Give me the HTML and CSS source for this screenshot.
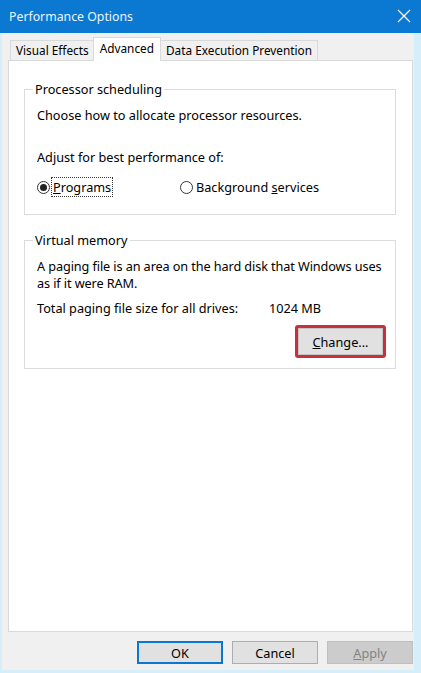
FILE: index.html
```html
<!DOCTYPE html>
<html lang="en">
<head>
    <meta charset="UTF-8">
    <meta name="viewport" content="width=device-width, initial-scale=1.0">
    <title>Performance Options</title>
    <link rel="stylesheet" href="styles.css">
</head>
<body>
    <div class="window">
        <div class="titlebar">
            <span class="title">Performance Options</span>
            <span class="close">
                <svg width="14" height="14" viewBox="0 0 14 14" fill="none" xmlns="http://www.w3.org/2000/svg">
                    <path d="M1 1 L13 13 M13 1 L1 13" stroke="#fff" stroke-width="1.2"/>
                </svg>
            </span>
        </div>

        <div class="client">
            <div class="tabs">
                <div class="tab">Visual Effects</div>
                <div class="tab tab-active">Advanced</div>
                <div class="tab">Data Execution Prevention</div>
            </div>

            <div class="panel">
                <fieldset class="group group-cpu">
                    <legend>Processor scheduling</legend>
                    <p class="line">Choose how to allocate processor resources.</p>
                    <p class="line line-gap">Adjust for best performance of:</p>
                    <div class="radios">
                        <label class="radio">
                            <span class="radio-dot radio-checked"></span>
                            <span class="focus"><u>P</u>rograms</span>
                        </label>
                        <label class="radio radio-second">
                            <span class="radio-dot"></span>
                            <span>Background <u>s</u>ervices</span>
                        </label>
                    </div>
                </fieldset>

                <fieldset class="group group-mem">
                    <legend>Virtual memory</legend>
                    <p class="line line-nowrap">A paging file is an area on the hard disk that Windows uses<br>as if it were RAM.</p>
                    <div class="size-row">
                        <span class="size-label">Total paging file size for all drives:</span>
                        <span>1024 MB</span>
                    </div>
                    <div class="change-row">
                        <div class="highlight">
                            <button class="btn btn-change"><u>C</u>hange...</button>
                        </div>
                    </div>
                </fieldset>
            </div>

            <div class="footer">
                <button class="btn btn-default">OK</button>
                <button class="btn">Cancel</button>
                <button class="btn btn-disabled"><u>A</u>pply</button>
            </div>
        </div>
    </div>
</body>
</html>
```

FILE: styles.css
```css
* {
    margin: 0;
    padding: 0;
    box-sizing: border-box;
}

body {
    font-family: 'Noto Sans', 'Open Sans', Arial, sans-serif;
    font-size: 12.7px;
    color: #000;
    width: 421px;
    height: 673px;
    overflow: hidden;
}

.window {
    width: 421px;
    height: 673px;
    display: flex;
    flex-direction: column;
    background: #d6eefa;
}

.titlebar {
    height: 33px;
    background: #0b78d2;
    display: flex;
    align-items: center;
    justify-content: space-between;
    padding: 0 10px 0 9px;
}

.title {
    color: #eaf6ff;
    font-size: 12.3px;
}

.close {
    display: flex;
    margin-top: -2px;
}

.client {
    flex: 1;
    display: flex;
    flex-direction: column;
    background: #f0f0f0;
    margin: 0 7px 3px 2px;
    padding: 4px 1px 6px 6px;
}

.tabs {
    display: flex;
    height: 23px;
    align-items: flex-end;
    padding-left: 2px;
    position: relative;
    z-index: 1;
}

.tab {
    height: 20px;
    line-height: 18px;
    padding: 0 5px;
    border: 1px solid #d9d9d9;
    border-bottom: none;
    background: #f0f0f0;
    margin-right: -1px;
    font-size: 11.8px;
}

.tab-active {
    height: 24px;
    line-height: 20px;
    background: #fff;
    margin: 0 -1px 0 -1px;
    padding: 0 6px;
    position: relative;
    top: 1px;
}

.panel {
    flex: 1;
    background: #fff;
    border: 1px solid #d9d9d9;
    padding: 20px 16px 0 15px;
}

.group {
    border: 1px solid #dcdcdc;
    padding: 0 8px 0 12px;
}

.group legend {
    padding: 0 2px;
    margin-left: -4px;
    line-height: 17px;
}

.group-cpu {
    height: 134px;
}

.group-mem {
    margin-top: 17px;
    height: 137px;
}

.line {
    line-height: 17px;
    margin-top: 9px;
}

.line-nowrap {
    white-space: nowrap;
    letter-spacing: -0.1px;
}

.line-gap {
    margin-top: 25px;
}

.radios {
    display: flex;
    margin-top: 12px;
}

.radio {
    display: flex;
    align-items: center;
    gap: 2px;
    width: 143px;
}

.radio-second {
    gap: 3px;
}

.radio-dot {
    width: 13px;
    height: 13px;
    border: 1px solid #333;
    border-radius: 50%;
    display: flex;
    align-items: center;
    justify-content: center;
}

.radio-checked::after {
    content: "";
    width: 7px;
    height: 7px;
    border-radius: 50%;
    background: #222;
}

.focus {
    outline: 1px dotted #333;
    outline-offset: 0;
    padding: 0 1px;
}

.size-row {
    display: flex;
    line-height: 17px;
    margin-top: 8px;
}

.size-label {
    width: 232px;
}

.change-row {
    display: flex;
    justify-content: flex-end;
    margin-top: 8px;
    margin-right: 1px;
}

.highlight {
    border: 3px solid #c8303b;
    border-radius: 3px;
    padding: 0;
}

.btn {
    font-family: inherit;
    font-size: 12.7px;
    width: 86px;
    height: 23px;
    background: #e1e1e1;
    border: 1px solid #adadad;
    color: #000;
}

.btn-change {
    width: 85px;
    height: 27px;
    border: 1px solid #c4c4c4;
}

.footer {
    display: flex;
    justify-content: flex-end;
    gap: 9px;
    padding-top: 9px;
}

.btn-default {
    border: 2px solid #0a78d0;
}

.btn-disabled {
    background: #cccccc;
    border-color: #bfbfbf;
    color: #838383;
}
```
